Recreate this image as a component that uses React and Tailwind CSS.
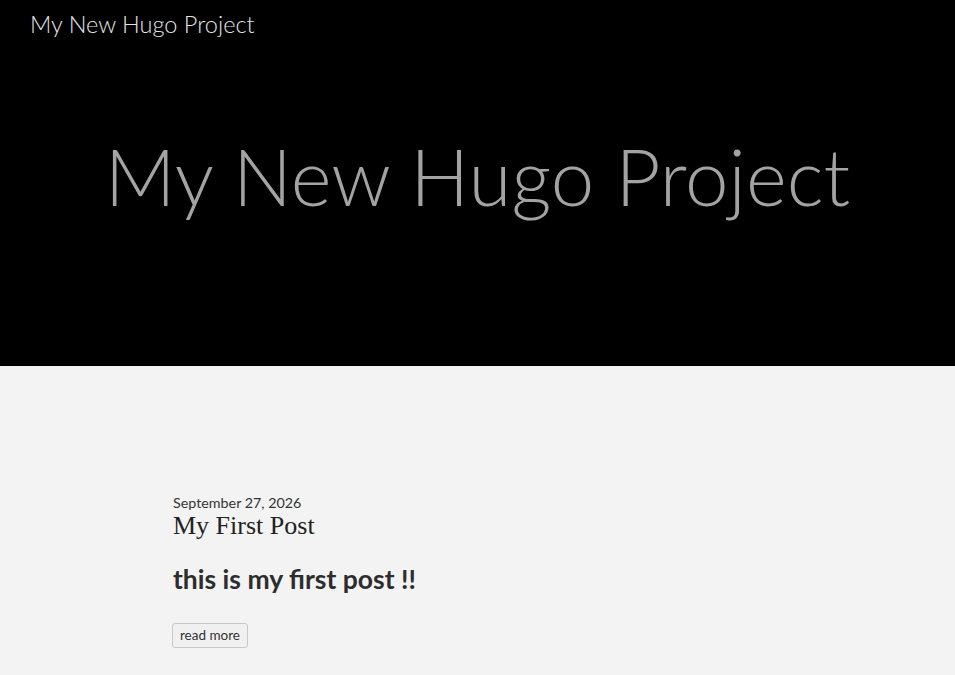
import React from "react";

export default function App() {
  return (
    <div className="min-h-[675px] bg-[#f3f3f3] font-['Lato',sans-serif]">
      <header className="h-[366px] bg-black flex flex-col">
        <div className="h-[50px] pl-[30px] flex items-start pt-[7px]">
          <a className="text-[23.5px] font-light text-[#e4e4e4] leading-[34px]">My New Hugo Project</a>
        </div>
        <div className="flex justify-center pt-[70px]">
          <h1 className="text-[78px] font-light text-[#a3a3a3] leading-[112px] whitespace-nowrap">My New Hugo Project</h1>
        </div>
      </header>
      <main className="pl-[173px] pt-[128px]">
        <div className="text-[14.3px] text-[#333] leading-[18px]">September 27, 2026</div>
        <h2 className="font-['Liberation_Serif',serif] text-[26px] text-[#222] leading-[28px]">My First Post</h2>
        <p className="mt-[22px] text-[26.5px] font-bold text-[#2d2d2d] leading-[34px]">this is my first post !!</p>
        <button className="mt-[27px] -ml-px h-[25px] w-[76px] border border-[#c8c8c8] rounded-[3px] bg-[#f0f0f0] text-[13.5px] text-[#333] leading-none">read more</button>
      </main>
    </div>
  );
}
